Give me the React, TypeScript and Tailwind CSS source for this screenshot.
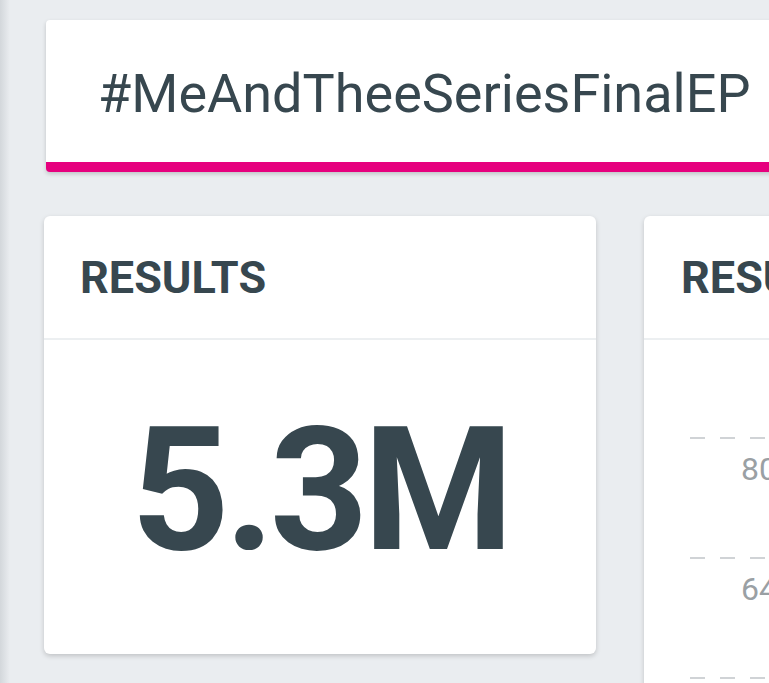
export default function App() {
  const ticks = ['800K', '640K', '480K']

  return (
    <div className="flex h-[683px] w-[769px] overflow-hidden bg-[#eaedf0] font-['Roboto',sans-serif] text-[#37474f]">
      {/* left edge shade */}
      <div className="w-[10px] shrink-0 bg-gradient-to-r from-[#d3d7db] to-[#eaedf0]" />

      <div className="flex shrink-0 flex-col pl-[34px] pt-[20px]">
        {/* hashtag banner */}
        <div className="ml-[2px] flex h-[152px] w-[900px] shrink-0 items-start rounded-[4px] border-b-[10px] border-[#e6007e] bg-white pl-[52px] pt-[44px] shadow-[0_2px_4px_rgba(0,0,0,0.18)]">
          <span className="text-[54px] leading-[60px]">#MeAndTheeSeriesFinalEP</span>
        </div>

        <div className="mt-[44px] flex shrink-0 gap-[48px]">
          {/* results count */}
          <div className="flex h-[438px] w-[552px] flex-col rounded-[6px] bg-white shadow-[0_2px_5px_rgba(0,0,0,0.18)]">
            <div className="flex h-[124px] items-center border-b-2 border-[#eceff1] pl-[36px]">
              <span className="text-[45px] font-bold leading-none">RESULTS</span>
            </div>
            <div className="flex flex-1 items-center justify-center pb-[14px]">
              <span className="text-[172px] font-bold leading-none tracking-[-5px]">5.3M</span>
            </div>
          </div>

          {/* results chart */}
          <div className="flex h-[520px] w-[552px] flex-col overflow-hidden rounded-[6px] bg-white shadow-[0_2px_5px_rgba(0,0,0,0.18)]">
            <div className="flex h-[124px] shrink-0 items-center border-b-2 border-[#eceff1] pl-[37px]">
              <span className="text-[45px] font-bold leading-none">RESULTS</span>
            </div>
            <div className="flex flex-col pl-[46px] pt-[97px]">
              {ticks.map((t) => (
                <div key={t} className="flex h-[120px] shrink-0 flex-col">
                  <div className="h-[2px] w-[400px] bg-[repeating-linear-gradient(90deg,#d0d3d6_0_15px,transparent_15px_30px)]" />
                  <span className="ml-[51px] mt-[10px] text-[32px] leading-[40px] text-[#9aa0a4]">{t}</span>
                </div>
              ))}
            </div>
          </div>
        </div>
      </div>
    </div>
  )
}
